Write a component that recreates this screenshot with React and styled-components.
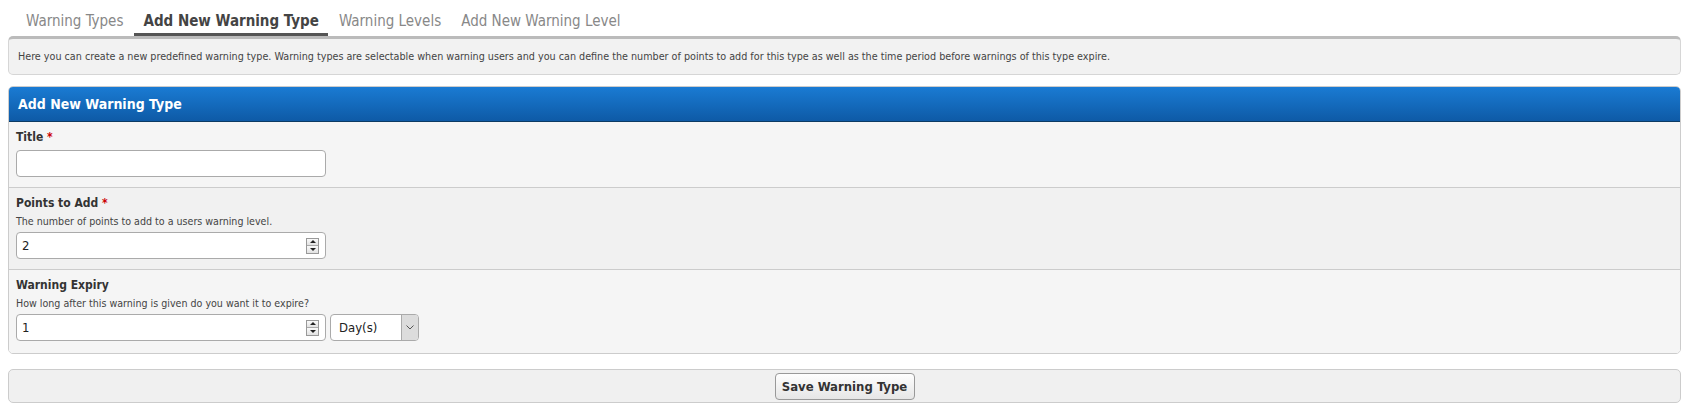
import React from 'react';
import styled, { createGlobalStyle } from 'styled-components';

const GlobalStyle = createGlobalStyle`
  body {
    margin: 8px;
    background: #fff;
    font-family: "DejaVu Sans Condensed", "Liberation Sans", sans-serif;
    color: #333;
  }
`;

const Tabs = styled.ul`
  display: flex;
  list-style: none;
  margin: 0;
  padding: 0 0 0 9px;
  height: 28px;
`;

const Tab = styled.li`
  padding: 3px 9px 5px;
  margin-right: 2px;
  font-size: 15px;
  line-height: 20px;
  font-weight: ${p => (p.active ? 'bold' : 'normal')};
  color: ${p => (p.active ? '#444' : '#888')};
  border-bottom: ${p => (p.active ? '3px solid #555' : '0')};
  position: relative;
  z-index: 1;
  cursor: pointer;
`;

const Intro = styled.div`
  background: #f2f2f2;
  border: 1px solid #d6d6d6;
  border-top: 3px solid #bbb;
  border-radius: 5px;
  padding: 11px 9px;
  font-size: 10.7px;
  line-height: 13px;
  color: #444;
  margin-bottom: 11px;
`;

const Panel = styled.div`
  border: 1px solid #ccc;
  border-radius: 5px;
  overflow: hidden;
`;

const PanelHead = styled.div`
  background: linear-gradient(to bottom, #1a7bd3, #0e5aa6);
  border-bottom: 1px solid #0c3b63;
  height: 34px;
  line-height: 34px;
  padding: 0 9px;
  color: #fff;
  font-weight: bold;
  font-size: 14px;
`;

const Row = styled.div`
  background: ${p => (p.alt ? '#f1f1f1' : '#f5f5f5')};
  border-bottom: ${p => (p.last ? '0' : '1px solid #ccc')};
  padding: 6px 7px ${p => (p.last ? '12px' : '10px')};
`;

const Label = styled.div`
  font-size: 12px;
  line-height: 18px;
  font-weight: bold;
  color: #333;
`;

const Required = styled.span`
  color: #c00;
`;

const Desc = styled.div`
  font-size: 10.6px;
  line-height: 14px;
  margin-top: 2px;
  color: #444;
`;

const Controls = styled.div`
  display: flex;
  gap: 4px;
  margin-top: 4px;
`;

const Field = styled.div`
  display: flex;
  align-items: center;
  width: 310px;
  height: 27px;
  box-sizing: border-box;
  background: #fff;
  border: 1px solid #aaa;
  border-radius: 4px;
  padding: 0 6px 0 5px;
`;

const TextInput = styled.input`
  flex: 1;
  min-width: 0;
  border: 0;
  outline: none;
  background: transparent;
  font-family: inherit;
  font-size: 13px;
  color: #222;
  padding: 0;
`;

const Spinner = styled.div`
  display: flex;
  flex-direction: column;
  width: 13px;
  height: 16px;
  box-sizing: border-box;
  border: 1px solid #999;
  background: #f0f0f0;
`;

const SpinHalf = styled.div`
  flex: 1;
  display: flex;
  align-items: center;
  justify-content: center;
  border-top: ${p => (p.down ? '1px solid #aaa' : '0')};
  background: linear-gradient(to bottom, #fafafa, #e2e2e2);
`;

const Arrow = styled.span`
  width: 0;
  height: 0;
  border-left: 3px solid transparent;
  border-right: 3px solid transparent;
  ${p => (p.down ? 'border-top: 3px solid #222;' : 'border-bottom: 3px solid #222;')}
`;

const SelectBox = styled.div`
  display: flex;
  width: 89px;
  height: 27px;
  box-sizing: border-box;
  border: 1px solid #aaa;
  border-radius: 4px;
  background: #fff;
  overflow: hidden;
`;

const Select = styled.select`
  flex: 1;
  min-width: 0;
  appearance: none;
  border: 0;
  outline: none;
  background: transparent;
  font-family: inherit;
  font-size: 13px;
  color: #222;
  padding: 0 0 0 8px;
`;

const SelectArrow = styled.div`
  width: 16px;
  display: flex;
  align-items: center;
  justify-content: center;
  background: #dcdcdc;
  border-left: 1px solid #aaa;
`;

const SaveBar = styled.div`
  margin-top: 15px;
  height: 34px;
  box-sizing: border-box;
  display: flex;
  align-items: center;
  justify-content: center;
  background: #f0f0f0;
  border: 1px solid #ccc;
  border-radius: 5px;
`;

const Button = styled.button`
  width: 140px;
  height: 27px;
  border: 1px solid #999;
  border-radius: 4px;
  background: linear-gradient(to bottom, #fefefe, #e6e6e6);
  font-family: inherit;
  font-weight: bold;
  font-size: 13px;
  color: #333;
  cursor: pointer;
`;

function NumberField({ value }) {
  return (
    <Field>
      <TextInput defaultValue={value} />
      <Spinner>
        <SpinHalf><Arrow /></SpinHalf>
        <SpinHalf down><Arrow down /></SpinHalf>
      </Spinner>
    </Field>
  );
}

const tabs = ['Warning Types', 'Add New Warning Type', 'Warning Levels', 'Add New Warning Level'];

export default function App() {
  return (
    <>
      <GlobalStyle />
      <Tabs>
        {tabs.map(t => (
          <Tab key={t} active={t === 'Add New Warning Type'}>{t}</Tab>
        ))}
      </Tabs>
      <Intro>
        Here you can create a new predefined warning type. Warning types are selectable when warning users and you can define the number of points to add for this type as well as the time period before warnings of this type expire.
      </Intro>
      <Panel>
        <PanelHead>Add New Warning Type</PanelHead>
        <Row>
          <Label>Title <Required>*</Required></Label>
          <Controls>
            <Field><TextInput /></Field>
          </Controls>
        </Row>
        <Row alt>
          <Label>Points to Add <Required>*</Required></Label>
          <Desc>The number of points to add to a users warning level.</Desc>
          <Controls>
            <NumberField value="2" />
          </Controls>
        </Row>
        <Row last>
          <Label>Warning Expiry</Label>
          <Desc>How long after this warning is given do you want it to expire?</Desc>
          <Controls>
            <NumberField value="1" />
            <SelectBox>
              <Select defaultValue="days">
                <option value="hours">Hour(s)</option>
                <option value="days">Day(s)</option>
                <option value="weeks">Week(s)</option>
                <option value="months">Month(s)</option>
                <option value="never">Never</option>
              </Select>
              <SelectArrow>
                <svg width="8" height="5" viewBox="0 0 8 5">
                  <path d="M0.5 0.5 L4 4 L7.5 0.5" fill="none" stroke="#555" strokeWidth="1" />
                </svg>
              </SelectArrow>
            </SelectBox>
          </Controls>
        </Row>
      </Panel>
      <SaveBar>
        <Button>Save Warning Type</Button>
      </SaveBar>
    </>
  );
}
